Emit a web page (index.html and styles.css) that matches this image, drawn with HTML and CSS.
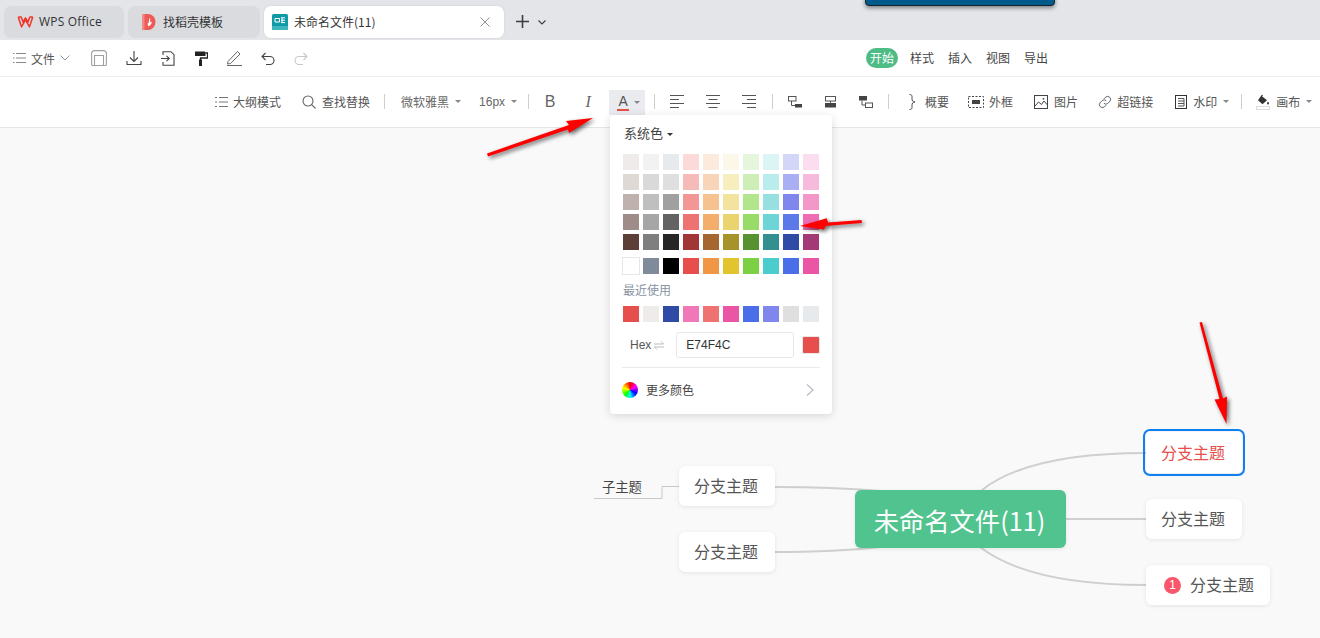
FILE: index.html
```html
<!DOCTYPE html>
<html lang="zh">
<head>
<meta charset="utf-8">
<title>未命名文件(11)</title>
<link rel="stylesheet" href="styles.css">
</head>
<body>
<div class="app">
  <header class="tabbar">
    <div class="tab tab-wps">
      <svg class="tab-ico" width="17" height="12" viewBox="0 0 17 12"><path d="M1.200 1l3.300 9.800 4-7 4 7L15.800 1M1.200 1h3l1.800 5 2.500-4 2.500 4 1.800-5h3" fill="none" stroke="#f0352a" stroke-width="1.500" stroke-linejoin="round"/></svg>
      <span class="tab-latin">WPS Office</span>
    </div>
    <div class="tab tab-tpl">
      <svg class="tab-ico" width="14" height="16" viewBox="0 0 14 16"><path d="M0 0h6a7.500 8 0 0 1 0 16H0z" fill="#ee5a55"/><path d="M0 0h2.500v16H0z" fill="#f08a85"/><path d="M8 3.500c.6 2 -.2 3.500.3 5 .5-.5 1-.8 1.500-1 0 2-1 4-3.300 4.800-.8-1-1.200-2.300-.7-3.500.4.400.7.600 1 .6-.3-2 .4-4.400 1.200-5.900z" fill="#fff"/></svg>
      <span>找稻壳模板</span>
    </div>
    <div class="tab tab-doc">
      <svg class="tab-ico" width="16" height="16" viewBox="0 0 16 16"><rect width="16" height="16" rx="1.500" fill="#0f9aa8"/><rect y="12" width="16" height="4" fill="#3db5bf"/><path d="M3 4.500h4.500v3.500H3zM9 3.800h4M9 6.200h4M9 8.600h4M10 3.800v4.800" fill="none" stroke="#fff" stroke-width="1"/></svg>
      <span class="tab-title">未命名文件(11)</span>
      <svg width="10" height="10" viewBox="0 0 10 10"><path d="M.5.500l9 9M9.500.500l-9 9" stroke="#8b8f96" stroke-width="1" fill="none"/></svg>
    </div>
    <svg class="tab-plus" width="15" height="15" viewBox="0 0 15 15"><path d="M7.500 1v13M1 7.500h13" stroke="#3a3d42" stroke-width="1.600" fill="none"/></svg>
    <svg class="tab-more" width="8" height="5" viewBox="0 0 8 5"><path d="M.5.500L4 4 7.500.500" stroke="#3a3d42" stroke-width="1.100" fill="none"/></svg>
    <div class="top-notch"></div>
  </header>

  <nav class="menubar">
    <div class="menu-left">
      <div class="file-menu">
        <svg width="13" height="12" viewBox="0 0 13 12"><path d="M0 1.500h1.500M3 1.500h10M0 6h1.500M3 6h10M0 10.500h1.500M3 10.500h10" stroke="#888" stroke-width="1" fill="none"/></svg>
        <span>文件</span>
        <svg width="10" height="6" viewBox="0 0 10 6"><path d="M.5.500L5 5 9.500.500" stroke="#999" stroke-width="1" fill="none"/></svg>
      </div>
      <div class="quick-tools">
        <svg width="16" height="16" viewBox="0 0 16 16"><path d="M2.500.6h11l1.900 1.900v12a1 1 0 0 1-1 1H1.600a1 1 0 0 1-1-1V2.500zM3.500 15.400V5.500h9v9.900" fill="none" stroke="#a0a0a0" stroke-width="1.100"/></svg>
        <svg width="16" height="16" viewBox="0 0 16 16"><path d="M8 1v10M4 7.500l4 4 4-4M1 11v3.500h14V11" fill="none" stroke="#444" stroke-width="1.100"/></svg>
        <svg width="14" height="15" viewBox="0 0 14 15"><path d="M2 4V.7h8l3 3v10.600H2V11M0 7.500h8M5.500 4.800l2.800 2.700-2.800 2.700" fill="none" stroke="#444" stroke-width="1.100"/></svg>
        <svg width="14" height="15" viewBox="0 0 14 15"><path d="M1 .5h9.500a1 1 0 0 1 1 1V5h-10.500z" fill="#222"/><path d="M11.500 2h2v5H6.500v2" fill="none" stroke="#222" stroke-width="1.300"/><rect x="5" y="8.500" width="3" height="6.500" fill="#222"/></svg>
        <svg width="15" height="16" viewBox="0 0 15 16"><path d="M1 11.500L10.500 1.500l2.500 2.500-9.500 9.500-3 .5zM0 15.500h15" fill="none" stroke="#666" stroke-width="1"/></svg>
        <svg width="14" height="13" viewBox="0 0 14 13"><path d="M4.500 1L1 4.500 4.500 8M1 4.500h8a4 4 0 0 1 0 8H5" fill="none" stroke="#444" stroke-width="1.100"/></svg>
        <svg width="14" height="13" viewBox="0 0 14 13"><path d="M9.500 1L13 4.500 9.500 8M13 4.500H5a4 4 0 0 0 0 8h4" fill="none" stroke="#c8c8c8" stroke-width="1.100"/></svg>
      </div>
    </div>
    <div class="menu-tabs">
      <span class="menu-tab is-on">开始</span>
      <span class="menu-tab">样式</span>
      <span class="menu-tab">插入</span>
      <span class="menu-tab">视图</span>
      <span class="menu-tab">导出</span>
    </div>
  </nav>

  <div class="toolbar">
    <div class="tool">
      <svg width="13" height="12" viewBox="0 0 13 12"><path d="M0 1.500h2M4 1.500h9M0 6h2M4 6h9M0 10.500h2M4 10.500h9" stroke="#777" stroke-width="1" fill="none"/></svg>
      <span>大纲模式</span>
    </div>
    <div class="tool tool-find">
      <svg width="14" height="14" viewBox="0 0 14 14"><circle cx="6" cy="6" r="5" fill="none" stroke="#666" stroke-width="1.100"/><path d="M9.700 9.700l3.800 3.800" stroke="#666" stroke-width="1.100"/></svg>
      <span>查找替换</span>
    </div>
    <i class="sep sep-a"></i>
    <div class="tool tool-font"><span class="muted">微软雅黑</span><i class="caret"></i></div>
    <div class="tool tool-size"><span class="muted latin">16px</span><i class="caret"></i></div>
    <i class="sep sep-b"></i>
    <span class="glyph glyph-b">B</span>
    <span class="glyph glyph-i">I</span>
    <div class="color-btn"><span class="color-a">A</span><i class="caret"></i></div>
    <i class="sep sep-c"></i>
    <div class="aligns">
      <svg width="14" height="13" viewBox="0 0 14 13"><path d="M0 .5h14M0 4.500h9M0 8.500h14M0 12.500h9" stroke="#555" stroke-width="1"/></svg>
      <svg width="14" height="13" viewBox="0 0 14 13"><path d="M0 .5h14M2.500 4.500h9M0 8.500h14M2.500 12.500h9" stroke="#555" stroke-width="1"/></svg>
      <svg width="14" height="13" viewBox="0 0 14 13"><path d="M0 .5h14M5 4.500h9M0 8.500h14M5 12.500h9" stroke="#555" stroke-width="1"/></svg>
    </div>
    <i class="sep sep-d"></i>
    <div class="inserts">
      <svg width="14" height="12" viewBox="0 0 14 12"><rect x=".5" y=".5" width="7.500" height="4.500" fill="none" stroke="#555"/><path d="M3.500 5v4.500h3.500" fill="none" stroke="#555"/><rect x="7" y="8" width="7" height="3.500" fill="#444"/></svg>
      <svg width="11" height="12" viewBox="0 0 11 12"><rect x=".5" y=".5" width="10" height="4.500" fill="none" stroke="#555"/><path d="M5.500 5v2" stroke="#555" fill="none"/><rect y="7" width="11" height="4.500" fill="#444"/></svg>
      <svg width="14" height="12" viewBox="0 0 14 12"><rect y="0" width="8" height="4.500" fill="#444"/><path d="M3 4.500v4.500h4" fill="none" stroke="#555"/><rect x="6.500" y="7" width="7" height="4.500" fill="none" stroke="#555"/></svg>
    </div>
    <i class="sep sep-e"></i>
    <div class="tool tool-sum">
      <svg width="7" height="16" viewBox="0 0 7 16"><path d="M.5.500c3 0 2.500 2 2.500 4s.5 3.500 3 3.500c-2.500 0-3 1.500-3 3.500s.5 4-2.500 4" fill="none" stroke="#444"/></svg>
      <span>概要</span>
    </div>
    <div class="tool tool-frame">
      <svg width="16" height="12" viewBox="0 0 16 12"><rect x=".5" y=".5" width="15" height="11" fill="none" stroke="#444" stroke-dasharray="2 1.500"/><rect x="4" y="4" width="8" height="4" fill="#444"/></svg>
      <span>外框</span>
    </div>
    <div class="tool tool-pic">
      <svg width="14" height="14" viewBox="0 0 14 14"><rect x=".5" y=".5" width="13" height="13" fill="none" stroke="#444"/><path d="M1 11l3.500-4 3 2.500L10 6l3.500 4" fill="none" stroke="#444"/><circle cx="9.500" cy="3.800" r=".9" fill="#444"/></svg>
      <span>图片</span>
    </div>
    <div class="tool tool-link">
      <svg width="14" height="14" viewBox="0 0 14 14"><path d="M6 3.800l1.800-1.800a3 3 0 0 1 4.200 4.200L9.800 8.500a3 3 0 0 1-4-.3M8 10.200l-1.800 1.800a3 3 0 0 1-4.200-4.200L4.200 5.500a3 3 0 0 1 4 .3" fill="none" stroke="#666"/></svg>
      <span>超链接</span>
    </div>
    <div class="tool tool-mark">
      <svg width="12" height="14" viewBox="0 0 12 14"><rect x=".5" y=".5" width="11" height="13" fill="none" stroke="#333"/><path d="M3 3.500h6M3 6h6M3 8.500h6M3 11h6M9 3.500V11" fill="none" stroke="#555" stroke-width="1"/></svg>
      <span>水印</span><i class="caret"></i>
    </div>
    <i class="sep sep-f"></i>
    <div class="tool tool-bg">
      <svg width="14" height="16" viewBox="0 0 14 16"><path d="M6 .5l1 1-1 .8 5 4-4.500 4-4.500-4z" fill="#333"/><path d="M12 7.500c.8 1 1 1.500 1 2a1 1 0 0 1-2 0c0-.5.200-1 1-2z" fill="#333"/><rect x=".5" y="12.500" width="13" height="3" fill="#fff" stroke="#ddd"/></svg>
      <span>画布</span><i class="caret"></i>
    </div>
  </div>

  <main class="canvas">
    <svg class="links" width="1320" height="511" viewBox="0 127 1320 511">
      <g fill="none" stroke="#cfcfcf" stroke-width="2">
        <path d="M775 487C820 487 845 488 880 491"/>
        <path d="M775 552C820 552 845 551 880 547"/>
        <path d="M982 490C1015 464 1075 453 1146 453"/>
        <path d="M1066 519H1146"/>
        <path d="M980 547C1015 574 1075 585 1146 585"/>
      </g>
      <path d="M594 498.500H662V486.500H679" fill="none" stroke="#c8c8c8" stroke-width="1"/>
    </svg>
    <div class="node root">未命名文件(11)</div>
    <div class="node branch b-left-1">分支主题</div>
    <div class="node branch b-left-2">分支主题</div>
    <div class="sub">子主题</div>
    <div class="node branch b-right-1">分支主题</div>
    <div class="node branch b-right-2">分支主题</div>
    <div class="node branch b-right-3"><i class="badge">1</i>分支主题</div>
  </main>

  <section class="picker">
    <div class="picker-head">系统色<i class="caret caret-dark"></i></div>
    <div class="grid">
      <i style="background:#efebea"></i><i style="background:#f2f2f2"></i><i style="background:#e7eaed"></i><i style="background:#fbdad9"></i><i style="background:#fcebdd"></i><i style="background:#fcf8e9"></i><i style="background:#e6f6dc"></i><i style="background:#daf5f4"></i><i style="background:#d3d6f7"></i><i style="background:#fadeef"></i>
      <i style="background:#dfd9d6"></i><i style="background:#d9d9d9"></i><i style="background:#dfdfdf"></i><i style="background:#f6bbb9"></i><i style="background:#f8d4b8"></i><i style="background:#f7eebe"></i><i style="background:#cdefb7"></i><i style="background:#b9ecec"></i><i style="background:#a8b0f3"></i><i style="background:#f6bbdc"></i>
      <i style="background:#bfb2ae"></i><i style="background:#bfbfbf"></i><i style="background:#a0a0a0"></i><i style="background:#f29796"></i><i style="background:#f5c290"></i><i style="background:#f2e49f"></i><i style="background:#b2e58c"></i><i style="background:#97e0e2"></i><i style="background:#7f87ec"></i><i style="background:#f397c8"></i>
      <i style="background:#9f8c88"></i><i style="background:#a6a6a6"></i><i style="background:#636363"></i><i style="background:#ef7272"></i><i style="background:#f4ae6b"></i><i style="background:#ead470"></i><i style="background:#98dc67"></i><i style="background:#6dd5d7"></i><i style="background:#5b79e9"></i><i style="background:#ee6cb3"></i>
      <i style="background:#5c4038"></i><i style="background:#7f7f7f"></i><i style="background:#262626"></i><i style="background:#a23535"></i><i style="background:#a5672f"></i><i style="background:#a6942a"></i><i style="background:#56922f"></i><i style="background:#348f90"></i><i style="background:#304ba6"></i><i style="background:#a33a75"></i>
    </div>
    <div class="grid grid-base">
      <i class="white" style="background:#fff"></i><i style="background:#7f8b9a"></i><i style="background:#000"></i><i style="background:#e74f4c"></i><i style="background:#ef9745"></i><i style="background:#e1c42e"></i><i style="background:#7bd143"></i><i style="background:#4bcccd"></i><i style="background:#4a6ee8"></i><i style="background:#eb55a6"></i>
    </div>
    <div class="recent-label">最近使用</div>
    <div class="grid grid-recent">
      <i style="background:#e74f4c"></i><i style="background:#efebea"></i><i style="background:#304ba6"></i><i style="background:#f078b8"></i><i style="background:#ef7272"></i><i style="background:#eb55a6"></i><i style="background:#4a6ee8"></i><i style="background:#7f87ec"></i><i style="background:#dfdfdf"></i><i style="background:#e7eaed"></i>
    </div>
    <div class="hex-row">
      <span class="hex-label">Hex</span>
      <svg width="10" height="9" viewBox="0 0 10 9"><path d="M0 3h9.500L7 .5M10 6H.5L3 8.500" fill="none" stroke="#b8bcc4" stroke-width="1"/></svg>
      <div class="hex-input">E74F4C</div>
      <i class="hex-swatch"></i>
    </div>
    <div class="more-row">
      <i class="wheel"></i>
      <span>更多颜色</span>
      <svg width="8" height="12" viewBox="0 0 8 12"><path d="M1 .5L7 6l-6 5.500" fill="none" stroke="#b4bac6" stroke-width="1.200"/></svg>
    </div>
  </section>

  <svg class="arrows" width="1320" height="638" viewBox="0 0 1320 638">
    <g fill="#f00" class="arrow-g">
      <path d="M487 153.500L569 125 566 121 593 118 569 133 568 129.500 488 156.500z"/>
      <path d="M861.500 220L828 222.500 826.700 218.300 800 226 824 229.500 825.500 226 862 223z"/>
      <path d="M1199.500 322.500L1202 322 1223 398.500 1227 396.500 1226.500 424 1214.500 399.500 1219.500 399z"/>
    </g>
  </svg>
</div>
</body>
</html>
```
FILE: styles.css
```css
* { box-sizing: border-box; }
html, body { margin: 0; padding: 0; }
body {
  width: 1320px;
  height: 638px;
  overflow: hidden;
  font-family: "Noto Sans CJK SC", "Liberation Sans", sans-serif;
  font-size: 12px;
  color: #444;
  background: #f9f9f9;
}
.app { position: relative; width: 1320px; height: 638px; display: flex; flex-direction: column; }

/* title tabs */
.tabbar { position: relative; height: 40px; flex: none; display: flex; align-items: flex-start; padding: 6px 0 0 4px; background: #e3e5e9; }
.tab { height: 32px; display: flex; align-items: center; border-radius: 7px; background: #d9dbdf; color: #333; font-size: 12px; margin-right: 4px; padding-bottom: 1px; }
.tab-latin { font-family: "Open Sans", "Liberation Sans", sans-serif; font-size: 12px; letter-spacing: .2px; }
.tab-wps { width: 120px; padding-left: 13px; gap: 5px; }
.tab-tpl { width: 132px; padding-left: 14px; gap: 7px; }
.tab-doc { width: 240px; padding: 0 14px 1px 8px; gap: 6px; background: #fff; box-shadow: 0 0 3px rgba(0,0,0,.08); }
.tab-title { flex: 1; }
.tab-plus { margin: 8px 0 0 7px; }
.tab-more { margin: 14px 0 0 8px; }
.top-notch { position: absolute; left: 865px; top: -4px; width: 190px; height: 10px; background: #005a8c; border: 1px solid #13242f; border-radius: 0 0 4px 4px; box-shadow: 0 2px 4px rgba(0,0,0,.45); }

/* menu row */
.menubar { height: 37px; flex: none; display: flex; align-items: center; background: #fff; border-bottom: 1px solid #eeeeee; padding-left: 13px; }
.menu-left { display: flex; align-items: center; }
.file-menu { display: flex; align-items: center; gap: 5px; width: 78px; color: #555; }
.quick-tools { display: flex; align-items: center; gap: 19px; }
.menu-tabs { display: flex; align-items: center; gap: 14px; margin-left: 558px; }
.menu-tab { color: #444; line-height: 20px; }
.menu-tab.is-on { width: 32px; height: 20px; margin-right: -2px; text-align: center; color: #fff; background: #4fbb85; border-radius: 10px; }

/* format toolbar */
.toolbar { height: 50px; flex: none; display: flex; align-items: center; padding: 0 0 1px 215px; background: #fff; box-shadow: 0 1px 0 #e6e6e6; position: relative; z-index: 1; }
.tool { display: flex; align-items: center; gap: 5px; color: #555; white-space: nowrap; }
.tool-find { margin-left: 21px; gap: 6px; }
.sep { width: 1px; height: 15px; flex: none; background: #cfcfcf; }
.sep-a { margin: 0 16px 0 14px; }
.tool-font { gap: 6px; }
.tool-size { gap: 6px; margin-left: 18px; }
.sep-b { margin: 0 15px 0 11px; }
.muted { color: #666; }
.latin { font-family: "Liberation Sans", sans-serif; font-size: 12px; }
.caret { display: inline-block; width: 0; height: 0; border-left: 3px solid transparent; border-right: 3px solid transparent; border-top: 3px solid #888; }
.caret-dark { border-top-color: #333; margin-left: 4px; vertical-align: middle; }
.glyph { width: 12px; text-align: center; font-family: "Liberation Sans", sans-serif; font-size: 16px; color: #666; }
.glyph-i { margin-left: 26px; font-style: italic; font-family: "Liberation Serif", serif; }
.color-btn { width: 36px; height: 25px; margin: 13px 0 0 15px; align-self: flex-start; display: flex; align-items: center; gap: 5px; padding: 0 0 1px 8px; background: #e9ebee; }
.color-a { font-size: 14px; line-height: 15px; color: #555; border-bottom: 2px solid #e74f4c; width: 12px; text-align: center; font-family: "Liberation Sans", sans-serif; }
.sep-c { margin: 0 15px 0 9px; }
.aligns { display: flex; gap: 22px; }
.sep-d { margin: 0 15px 0 16px; }
.inserts { display: flex; gap: 23px; align-items: center; }
.sep-e { margin: 0 20px 0 15px; }
.tool-sum { gap: 9px; }
.tool-frame { margin-left: 19px; gap: 5px; }
.tool-pic { margin-left: 21px; gap: 6px; }
.tool-link { margin-left: 20px; }
.tool-mark { margin-left: 22px; gap: 6px; }
.sep-f { margin: 0 14px 0 12px; }
.tool-bg { gap: 6px; }

/* mind map */
.canvas { position: relative; flex: 1; background: #f9f9f9; }
.links { position: absolute; left: 0; top: 0; }
.node { position: absolute; display: flex; align-items: center; justify-content: center; background: #fff; border-radius: 6px; font-size: 16px; color: #555; box-shadow: 0 1px 4px rgba(0,0,0,.09); }
.root { left: 855px; top: 363px; width: 211px; height: 58px; padding: 2px 2px 0 0; font-size: 25.3px; color: #fff; background: #50c38e; }
.branch { width: 96px; height: 40px; padding: 0 2px 2px 0; }
.b-left-1 { left: 679px; top: 339px; }
.b-left-2 { left: 679px; top: 405px; }
.sub { position: absolute; left: 602px; top: 350px; font-size: 13.3px; line-height: 20px; color: #444; }
.b-right-1 { left: 1146px; top: 305px; color: #e74f4c; outline: 2px solid #0d7ff0; outline-offset: 1px; border-radius: 4px; height: 41px; }
.b-right-2 { left: 1146px; top: 372px; }
.b-right-3 { left: 1146px; top: 438px; width: 124px; padding: 0 0 2px 18px; gap: 9px; justify-content: flex-start; }
.badge { width: 17px; height: 17px; margin-top: 2px; border-radius: 50%; background: #f9566c; color: #fff; font: normal 12px/17px "Liberation Sans", sans-serif; text-align: center; }

/* colour popover */
.picker { position: absolute; left: 610px; top: 115px; width: 222px; height: 299px; padding: 8px 12px 0 13px; background: #fff; border-radius: 4px; box-shadow: 0 2px 10px rgba(0,0,0,.14); z-index: 2; }
.picker-head { height: 20px; line-height: 20px; padding-left: 1px; color: #444; font-size: 13px; }
.grid { display: grid; grid-template-columns: repeat(10, 16px); gap: 4px; margin-top: 11px; }
.grid i { display: block; width: 16px; height: 16px; }
.grid-base { margin-top: 8px; }
.grid-base .white { outline: 1px solid #e5e7eb; }
.recent-label { margin-top: 7px; line-height: 18px; color: #8a94a3; }
.grid-recent { margin-top: 7px; }
.hex-row { display: flex; align-items: center; height: 26px; margin-top: 10px; padding-left: 7px; }
.hex-label { color: #555; margin-right: 3px; font-family: "Liberation Sans", sans-serif; font-size: 12px; }
.hex-input { width: 118px; height: 26px; margin-left: 12px; padding-left: 9px; line-height: 24px; border: 1px solid #e6e7ec; border-radius: 3px; color: #333; font-family: "Liberation Sans", sans-serif; font-size: 12px; }
.hex-swatch { width: 18px; height: 18px; margin-left: 8px; background: #e74f4c; border: 1px solid #e6e6e6; border-radius: 2px; }
.more-row { display: flex; align-items: center; height: 44px; margin-top: 9px; border-top: 1px solid #e9e9ee; color: #444; width: 198px; margin-left: -1px; }
.more-row span { margin-left: 8px; flex: 1; }
.more-row svg { margin-right: 6px; }
.wheel { width: 16px; height: 16px; border-radius: 50%; background: conic-gradient(#f00, #f0f 17%, #00f 33%, #0ff 50%, #0f0 62%, #ff0 80%, #f00); }

.arrows { position: absolute; left: 0; top: 0; z-index: 3; pointer-events: none; }
.arrow-g { filter: drop-shadow(2px 2px 2px rgba(0,0,0,.6)); }
```
